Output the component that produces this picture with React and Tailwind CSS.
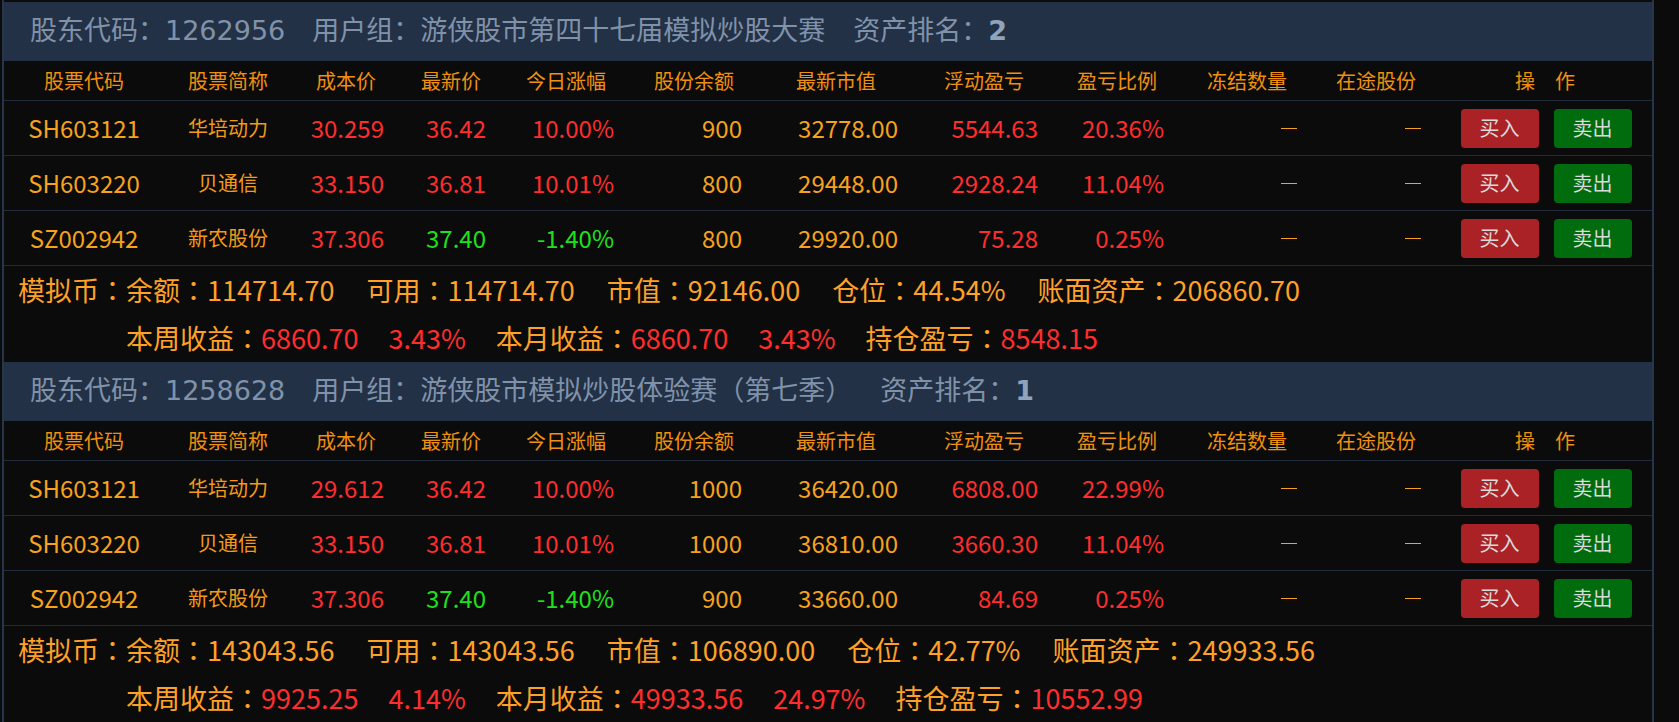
const accounts = [
  {
    code: "1262956",
    group: "游侠股市第四十七届模拟炒股大赛",
    rank: "2",
    rows: [
      { code: "SH603121", name: "华培动力", cost: "30.259", price: "36.42", chg: "10.00%", qty: "900", mv: "32778.00", pl: "5544.63", plPct: "20.36%", up: true },
      { code: "SH603220", name: "贝通信", cost: "33.150", price: "36.81", chg: "10.01%", qty: "800", mv: "29448.00", pl: "2928.24", plPct: "11.04%", up: true },
      { code: "SZ002942", name: "新农股份", cost: "37.306", price: "37.40", chg: "-1.40%", qty: "800", mv: "29920.00", pl: "75.28", plPct: "0.25%", up: false },
    ],
    summary: {
      balance: "114714.70",
      avail: "114714.70",
      mv: "92146.00",
      pos: "44.54%",
      assets: "206860.70",
      week: "6860.70",
      weekPct: "3.43%",
      month: "6860.70",
      monthPct: "3.43%",
      hold: "8548.15",
    },
  },
  {
    code: "1258628",
    group: "游侠股市模拟炒股体验赛（第七季）",
    rank: "1",
    rows: [
      { code: "SH603121", name: "华培动力", cost: "29.612", price: "36.42", chg: "10.00%", qty: "1000", mv: "36420.00", pl: "6808.00", plPct: "22.99%", up: true },
      { code: "SH603220", name: "贝通信", cost: "33.150", price: "36.81", chg: "10.01%", qty: "1000", mv: "36810.00", pl: "3660.30", plPct: "11.04%", up: true },
      { code: "SZ002942", name: "新农股份", cost: "37.306", price: "37.40", chg: "-1.40%", qty: "900", mv: "33660.00", pl: "84.69", plPct: "0.25%", up: false },
    ],
    summary: {
      balance: "143043.56",
      avail: "143043.56",
      mv: "106890.00",
      pos: "42.77%",
      assets: "249933.56",
      week: "9925.25",
      weekPct: "4.14%",
      month: "49933.56",
      monthPct: "24.97%",
      hold: "10552.99",
    },
  },
];

const headers = ["股票代码", "股票简称", "成本价", "最新价", "今日涨幅", "股份余额", "最新市值", "浮动盈亏", "盈亏比例", "冻结数量", "在途股份", "操　作"];

const cols =
  "grid grid-cols-[160px_128px_108px_102px_128px_128px_156px_140px_126px_134px_124px_1fr] items-center";

function Num({ children, tone = "orange" }) {
  const color = tone === "red" ? "text-[#ff2d2d]" : tone === "green" ? "text-[#1ee11e]" : "text-[#f7a21d]";
  return <div className={`pr-4 text-right text-[24px] ${color}`}>{children}</div>;
}

function Dash() {
  return (
    <div className="flex justify-end pr-4">
      <span className="mr-[1px] h-[1px] w-[16px] bg-[#f7a21d]" />
    </div>
  );
}

function StockRow({ row }) {
  const tone = row.up ? "red" : "green";
  return (
    <div className={`${cols} h-[55px] border-b border-[#202c3c]`}>
      <div className="text-center text-[24px] text-[#f7a21d]">{row.code}</div>
      <div className="text-center text-[20px] text-[#f39a1a]">{row.name}</div>
      <Num tone="red">{row.cost}</Num>
      <Num tone={tone}>{row.price}</Num>
      <Num tone={tone}>{row.chg}</Num>
      <Num>{row.qty}</Num>
      <Num>{row.mv}</Num>
      <Num tone="red">{row.pl}</Num>
      <Num tone="red">{row.plPct}</Num>
      <Dash />
      <Dash />
      <div className="flex justify-center gap-[15px] pl-[2px]">
        <button className="h-[39px] w-[78px] rounded-[4px] bg-[#aa2226] text-[20px] text-[#dadada]">买入</button>
        <button className="h-[39px] w-[78px] rounded-[4px] bg-[#006c0e] text-[20px] text-[#dadada]">卖出</button>
      </div>
    </div>
  );
}

function Item({ label, value, red }) {
  return (
    <span>
      {label}：<span className={red ? "text-[#ff2d2d]" : ""}>{value}</span>
    </span>
  );
}

function Summary({ s }) {
  return (
    <div className="h-[96px] font-['Noto_Sans_CJK_TC',sans-serif] text-[27px] leading-[48px] text-[#ffa126]">
      <div className="flex gap-[32px] pl-[14px]">
        <span>
          模拟币：<Item label="余额" value={s.balance} />
        </span>
        <Item label="可用" value={s.avail} />
        <Item label="市值" value={s.mv} />
        <Item label="仓位" value={s.pos} />
        <Item label="账面资产" value={s.assets} />
      </div>
      <div className="flex gap-[30px] pl-[122px]">
        <Item label="本周收益" value={s.week} red />
        <span className="text-[#ff2d2d]">{s.weekPct}</span>
        <Item label="本月收益" value={s.month} red />
        <span className="text-[#ff2d2d]">{s.monthPct}</span>
        <Item label="持仓盈亏" value={s.hold} red />
      </div>
    </div>
  );
}

function Account({ acc }) {
  return (
    <div>
      <div className="flex h-[59px] items-center bg-[#223145] pl-[26px] font-['DejaVu_Sans','Noto_Sans_CJK_SC',sans-serif] text-[27px] text-[#8092aa]">
        <span>股东代码：{acc.code}</span>
        <span className="ml-[27px]">用户组：{acc.group}</span>
        <span className="ml-[28px]">
          资产排名：<span className="font-bold text-[#8fa3bb]">{acc.rank}</span>
        </span>
      </div>
      <div className={`${cols} h-[40px] border-b border-[#202c3c]`}>
        {headers.map((h) => (
          <div key={h} className="text-center text-[20px] text-[#f0900f]">
            {h}
          </div>
        ))}
      </div>
      {acc.rows.map((row) => (
        <StockRow key={row.code} row={row} />
      ))}
      <Summary s={acc.summary} />
    </div>
  );
}

export default function App() {
  return (
    <div className="min-h-screen bg-[#0b0b0b] font-['Noto_Sans_CJK_SC',sans-serif]">
      <div className="ml-[2px] w-[1652px] border-x-2 border-[#26354a] pt-[2px]">
        {accounts.map((acc) => (
          <Account key={acc.code} acc={acc} />
        ))}
      </div>
    </div>
  );
}
